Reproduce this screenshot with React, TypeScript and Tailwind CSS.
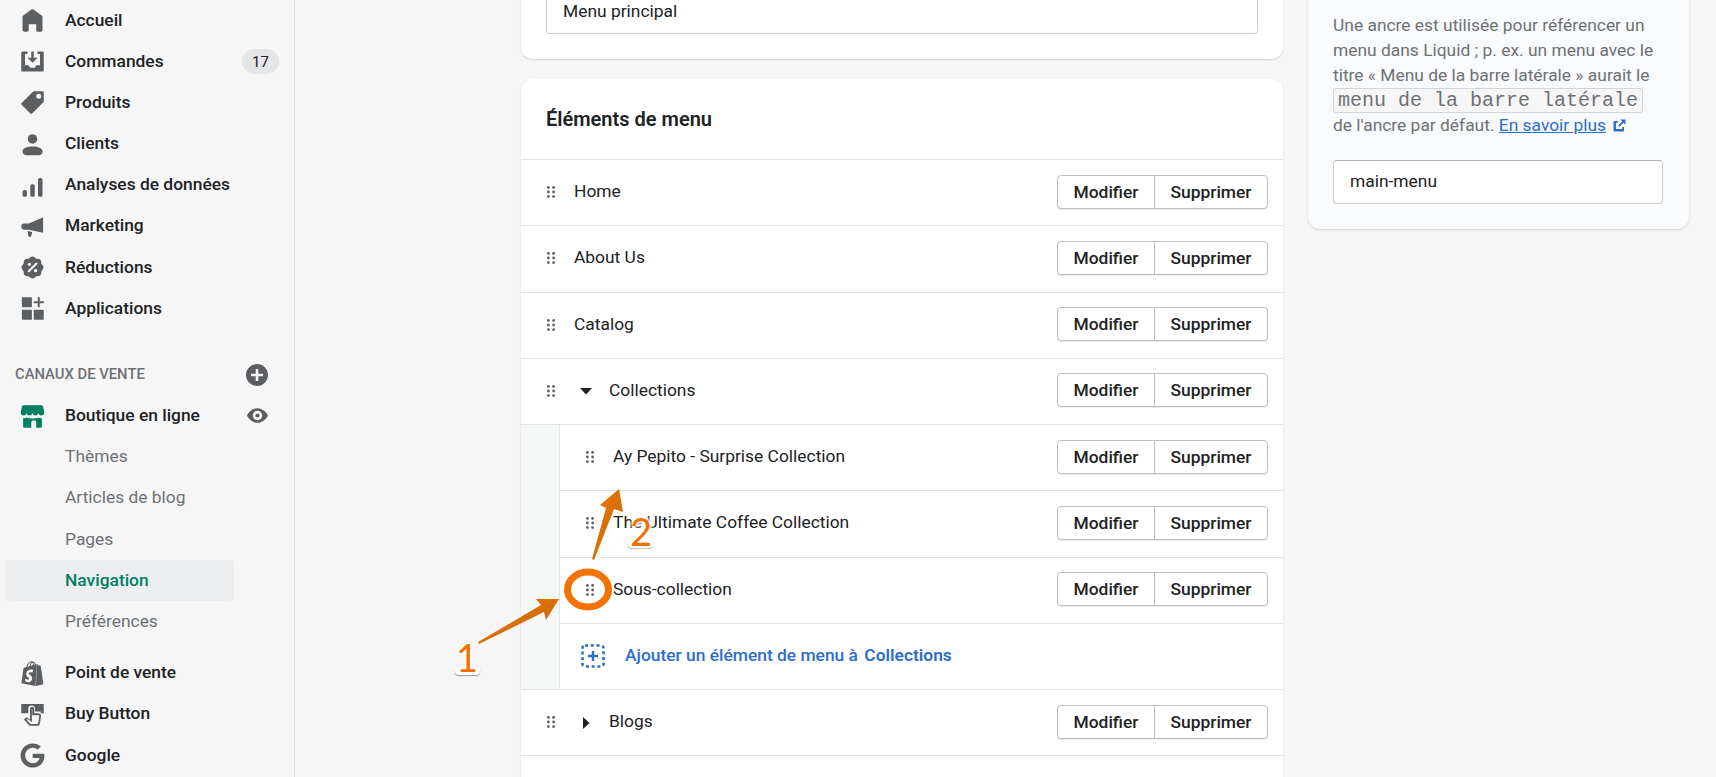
import { ReactNode } from 'react';
import { SiShopify } from 'react-icons/si';
import { FaGoogle } from 'react-icons/fa';

// --- sidebar icons ---
const Svg = ({ children, className = 'w-[25px] h-[25px] text-[#5c5f62]' }: { children: ReactNode; className?: string }) => (
  <svg viewBox="0 0 20 20" fill="currentColor" className={className}>{children}</svg>
);

const HomeIcon = () => (
  <Svg><path d="M18 7.261V17.5c0 .841-.672 1.5-1.5 1.5h-2c-.828 0-1.5-.659-1.5-1.5V13H7v4.477C7 18.318 6.328 19 5.5 19h-2c-.828 0-1.5-.682-1.5-1.523V7.261a1.5 1.5 0 0 1 .615-1.21l6.59-4.82a1.481 1.481 0 0 1 1.59-.01l6.59 4.82A1.5 1.5 0 0 1 18 7.26z" /></Svg>
);
const OrdersIcon = () => (
  <Svg>
    <path d="M2 2h4v2H4v9h3l1 2h4l1-2h3V4h-2V2h4a1 1 0 0 1 1 1v14a1 1 0 0 1-1 1H2a1 1 0 0 1-1-1V3a1 1 0 0 1 1-1z" />
    <path d="M9 2h2v5h3l-4 4-4-4h3z" />
  </Svg>
);
const TagIcon = () => (
  <Svg><path fillRule="evenodd" d="M18 1h-7a1 1 0 0 0-.7.3l-9 9a1 1 0 0 0 0 1.4l7 7a1 1 0 0 0 1.4 0l9-9A1 1 0 0 0 19 9V2a1 1 0 0 0-1-1zm-3 6a2 2 0 1 1 0-4 2 2 0 0 1 0 4z" /></Svg>
);
const UserIcon = () => (
  <Svg>
    <circle cx="10" cy="5.500" r="3.800" />
    <path d="M2 15.500c0-2.600 3.600-4 8-4s8 1.400 8 4c0 2-1.500 3-3 3H5c-1.500 0-3-1-3-3z" />
  </Svg>
);
const BarsIcon = () => (
  <Svg>
    <rect x="2" y="13.500" width="3.600" height="5.500" rx="1.500" />
    <rect x="8.200" y="9" width="3.600" height="10" rx="1.500" />
    <rect x="14.400" y="4" width="3.600" height="15" rx="1.500" />
  </Svg>
);
const MegaphoneIcon = () => (
  <Svg>
    <path d="M18.500 2.500v12.500L7 12.500H3.500a2.500 2.500 0 0 1 0-5H7z" />
    <path d="M6 13.500l3.800.9-.9 3.400a.8.8 0 0 1-1 .5l-.7-.2a.8.8 0 0 1-.6-.7z" />
  </Svg>
);
const DiscountIcon = () => (
  <Svg>
    <rect x="3" y="3" width="14" height="14" rx="3" />
    <rect x="3" y="3" width="14" height="14" rx="3" transform="rotate(45 10 10)" />
    <path d="M7 13l6-6" stroke="#f6f6f7" strokeWidth="1.800" strokeLinecap="round" />
    <circle cx="7.500" cy="7.500" r="1.300" fill="#f6f6f7" />
    <circle cx="12.500" cy="12.500" r="1.300" fill="#f6f6f7" />
  </Svg>
);
const AppsIcon = () => (
  <Svg>
    <rect x="1.500" y="1" width="8" height="8" rx=".6" />
    <rect x="1.500" y="11" width="8" height="8" rx=".6" />
    <rect x="11" y="11" width="8" height="8" rx=".6" />
    <path d="M14.200 1h1.600v3.200H19v1.600h-3.200V9h-1.600V5.800H11V4.200h3.200z" />
  </Svg>
);
const StoreIcon = () => (
  <Svg className="w-[25px] h-[25px] text-[#008060]">
    <path d="M3 1h14a1.500 1.500 0 0 1 1.500 1.300L19.500 7a2.400 2.400 0 0 1-4.700.4 2.500 2.500 0 0 1-4.800 0 2.500 2.500 0 0 1-4.800 0A2.400 2.400 0 0 1 .5 7l1-4.700A1.500 1.500 0 0 1 3 1z" />
    <path d="M2.500 11.200c1 .3 2 .2 2.800-.4.900.6 2.100.8 3.100.5v.200h3.200v-.2c1 .3 2.200.1 3.100-.5.800.6 1.800.7 2.800.4V18a1 1 0 0 1-1 1h-3.500v-4a2 2 0 0 0-4 0v4H3.500a1 1 0 0 1-1-1z" />
  </Svg>
);
const BuyButtonIcon = () => (
  <Svg>
    <path d="M1 1.500h18V9h-2.500V7.500H12V5.500a2.700 2.700 0 0 0-5.400 0V9H1z" />
    <path fillRule="evenodd" d="M8 5.500a1.700 1.700 0 0 1 3.400 0V9h3.300c1.300 0 2.300 1 2.100 2.300l-.9 6c-.1.900-.9 1.700-1.900 1.700H8.500c-.6 0-1.100-.3-1.500-.7L3.200 14l1.200-1.200c.5-.5 1.300-.5 1.800 0L8 14zm1.500 0v10.500L6 13.500l-.8.600 3 3.400h5.800c.3 0 .5-.2.600-.5l.8-6c0-.3-.2-.5-.6-.5H9.800V5.500z" />
  </Svg>
);

const GripIcon = () => (
  <svg viewBox="0 0 8 12" className="w-[8px] h-[12px] text-[#5c5f62]" fill="currentColor">
    {[1.400, 6, 10.600].map(y => (
      <g key={y}>
        <circle cx="1.400" cy={y} r="1.400" />
        <circle cx="6.600" cy={y} r="1.400" />
      </g>
    ))}
  </svg>
);

const mainNav = [
  { label: 'Accueil', icon: <HomeIcon /> },
  { label: 'Commandes', icon: <OrdersIcon />, badge: '17' },
  { label: 'Produits', icon: <TagIcon /> },
  { label: 'Clients', icon: <UserIcon /> },
  { label: 'Analyses de données', icon: <BarsIcon /> },
  { label: 'Marketing', icon: <MegaphoneIcon /> },
  { label: 'Réductions', icon: <DiscountIcon /> },
  { label: 'Applications', icon: <AppsIcon /> },
];

const NavRow = ({ icon, label, right }: { icon: ReactNode; label: string; right?: ReactNode }) => (
  <div className="flex items-center h-[41.200px] pl-[20px] pr-[15px] font-medium text-[#202223]">
    <span className="w-[45px] flex items-center">{icon}</span>
    <span className="flex-1 -mt-[2px]">{label}</span>
    {right}
  </div>
);

const SubRow = ({ label, active }: { label: string; active?: boolean }) => (
  <div className={`flex items-center h-[41.200px] ml-[5px] w-[229px] pl-[60px] rounded ${active ? 'bg-[#edeef0] text-[#007f5f] font-medium' : 'text-[#6d7175]'}`}>
    <span className="-mt-[2px]">{label}</span>
  </div>
);

const Sidebar = () => (
  <aside className="w-[295px] shrink-0 border-r border-[#e1e3e5] bg-[#f6f6f7]">
    {mainNav.map(item => (
      <NavRow
        key={item.label}
        icon={item.icon}
        label={item.label}
        right={item.badge ? <span className="w-[37px] h-[25px] flex items-center justify-center rounded-full bg-[#e4e5e7] text-[15px] text-[#202223] font-normal">{item.badge}</span> : undefined}
      />
    ))}
    <div className="flex items-center h-[41px] mt-[25px] pl-[15px] pr-[26px] text-[14.800px] font-medium text-[#6d7175]">
      <span className="flex-1 -mt-[1px]">CANAUX DE VENTE</span>
      <svg viewBox="0 0 20 20" className="w-[22px] h-[22px] text-[#5c5f62]" fill="currentColor">
        <path fillRule="evenodd" d="M10 0a10 10 0 1 1 0 20 10 10 0 0 1 0-20zm-1.200 4.500v4.300H4.500v2.400h4.300v4.300h2.400v-4.300h4.300V8.800h-4.300V4.500z" />
      </svg>
    </div>
    <NavRow
      icon={<StoreIcon />}
      label="Boutique en ligne"
      right={
        <svg viewBox="0 0 20 20" className="w-[21px] h-[21px] mr-[11px] -mt-[1px] text-[#5c5f62]" fill="currentColor">
          <path fillRule="evenodd" d="M10 3c5 0 9 4.500 10 7-1 2.500-5 7-10 7S1 12.500 0 10c1-2.500 5-7 10-7zm0 2.500a4.500 4.500 0 1 0 0 9 4.500 4.500 0 0 0 0-9zM10 8a2 2 0 1 1 0 4 2 2 0 0 1 0-4z" />
        </svg>
      }
    />
    <SubRow label="Thèmes" />
    <SubRow label="Articles de blog" />
    <SubRow label="Pages" />
    <SubRow label="Navigation" active />
    <SubRow label="Préférences" />
    <div className="h-[10px]" />
    <NavRow icon={<SiShopify className="w-[25px] h-[25px] text-[#5c5f62]" />} label="Point de vente" />
    <NavRow icon={<BuyButtonIcon />} label="Buy Button" />
    <NavRow icon={<FaGoogle className="w-[25px] h-[25px] text-[#5c5f62]" />} label="Google" />
  </aside>
);

const Actions = () => (
  <div className="ml-auto -mt-[2px] flex h-[34px] rounded border border-[#babfc3] bg-white shadow-[0_1px_0_rgba(0,0,0,0.08)] font-medium text-[#202223]">
    <span className="w-[97px] flex items-center justify-center border-r border-[#babfc3]">Modifier</span>
    <span className="w-[112px] flex items-center justify-center">Supprimer</span>
  </div>
);

const Caret = ({ open }: { open: boolean }) => (
  <svg viewBox="0 0 12 12" className="w-[12px] h-[12px] text-[#202223] mr-[17px]" fill="currentColor">
    {open ? <path d="M0 3h12L6 9.500z" /> : <path d="M3 0l6.500 6L3 12z" />}
  </svg>
);

const Row = ({ label, caret }: { label: string; caret?: 'open' | 'closed' }) => (
  <div className="flex items-center h-[66.250px] pl-[26px] pr-[15px] border-b border-[#e1e3e5] text-[#202223]">
    <span className="w-[27px] -mt-[1px] flex items-center"><GripIcon /></span>
    {caret === 'open' && <span className="ml-[6px]"><Caret open /></span>}
    {caret === 'closed' && <span className="ml-[6px]"><Caret open={false} /></span>}
    <span className="-mt-[3px]">{label}</span>
    <Actions />
  </div>
);

const ChildRow = ({ label }: { label: string }) => (
  <div className="flex items-center h-[66.250px] pl-[26px] pr-[15px] border-b border-[#e1e3e5] text-[#202223]">
    <span className="w-[27px] -mt-[1px] flex items-center"><GripIcon /></span>
    <span className="-mt-[3px]">{label}</span>
    <Actions />
  </div>
);

// orange arrows, ring and digits drawn over the page
const Annotations = () => (
  <>
    <svg className="absolute left-0 top-0 w-[1716px] h-[777px] pointer-events-none" viewBox="0 0 1716 777">
      <defs>
        <linearGradient id="arrowFill" x1="0" y1="0" x2="1" y2="1">
          <stop offset="0" stopColor="#f57c00" />
          <stop offset="1" stopColor="#b9620c" />
        </linearGradient>
      </defs>
      <polygon points="478,642 541,605 536,599 559,599 546,620 544,612 479,644" fill="url(#arrowFill)" />
      <polygon points="592,559 606,508 600,505 619,489 623,512 614,509 594,560" fill="url(#arrowFill)" />
      <ellipse cx="588" cy="589.500" rx="20.500" ry="17.500" fill="none" stroke="#f37300" strokeWidth="7" />
    </svg>
    <span className="absolute left-[455px] top-[668px] w-[25px] h-[7px] rounded-b bg-white shadow-[0_1px_1px_rgba(0,0,0,0.4)]" />
    <span className="absolute left-[628px] top-[541px] w-[25px] h-[7px] rounded-b bg-white shadow-[0_1px_1px_rgba(0,0,0,0.4)]" />
    <span className="absolute left-[456px] top-[634px] text-[38px] leading-[46px] text-[#f26f00] font-['Lato',sans-serif] [text-shadow:0_0_2px_#fff,0_0_2px_#fff,0_0_3px_#fff,0_0_4px_#fff]">1</span>
    <span className="absolute left-[630px] top-[508px] text-[38px] leading-[46px] text-[#f26f00] font-['Lato',sans-serif] [text-shadow:0_0_2px_#fff,0_0_3px_#fff,0_0_4px_#fff,0_0_5px_#fff,0_0_6px_#fff]">2</span>
  </>
);

export default function App() {
  return (
    <div className="relative flex h-[777px] overflow-hidden bg-[#f6f6f7] font-['Roboto',sans-serif] text-[17.400px]">
      <Sidebar />

      <main className="flex-1 flex items-start pl-[226px] gap-[25px]">
        <div className="w-[762px] shrink-0 flex flex-col gap-[20px]">
          {/* 名前カード */}
          <div className="-mt-[40px] bg-white rounded-xl shadow-[0_1px_2px_rgba(0,0,0,0.15)] pt-[30px] pb-[25px] px-[25px]">
            <div className="h-[44px] w-[712px] pl-[16px] flex items-center border border-[#c9cccf] border-t-[#aeb4b9] rounded text-[#202223]">
              <span className="-mt-[2px]">Menu principal</span>
            </div>
          </div>

          {/* メニュー項目 */}
          <div className="bg-white rounded-t-xl shadow-[0_1px_2px_rgba(0,0,0,0.15)]">
            <div className="h-[81px] pl-[25px] flex items-center border-b border-[#e1e3e5] text-[20px] font-semibold text-[#202223]">Éléments de menu</div>
            <Row label="Home" />
            <Row label="About Us" />
            <Row label="Catalog" />
            <Row label="Collections" caret="open" />
            <div className="flex border-b border-[#e1e3e5]">
              <div className="w-[39px] shrink-0 bg-[#f6f7f7] border-r border-[#e1e3e5]" />
              <div className="flex-1 min-w-0">
                <ChildRow label="Ay Pepito - Surprise Collection" />
                <ChildRow label="The Ultimate Coffee Collection" />
                <ChildRow label="Sous-collection" />
                <div className="flex items-center h-[65.250px] pl-[21px] text-[#2c6ecb] font-medium">
                  <svg viewBox="0 0 24 24" className="w-[24px] h-[24px] mr-[20px]" fill="none" stroke="currentColor">
                    <rect x="1.500" y="1.500" width="21" height="21" rx="2.500" strokeWidth="2.600" strokeDasharray="3 2.750" />
                    <path d="M12 7v10M7 12h10" strokeWidth="2.400" />
                  </svg>
                  <span className="-mt-[2px]">Ajouter un élément de menu à <b className="font-semibold ml-[2px]">Collections</b></span>
                </div>
              </div>
            </div>
            <Row label="Blogs" caret="closed" />
            <div className="h-[40px]" />
          </div>
        </div>

        {/* アンカー説明 */}
        <div className="-mt-[40px] w-[381px] shrink-0 bg-[#f9fafb] rounded-xl shadow-[0_1px_2px_rgba(0,0,0,0.15)] pt-[53px] pb-[25px] pl-[25px] pr-[26px]">
          <p className="text-[#6d7175] leading-[25px]">
            Une ancre est utilisée pour référencer un menu dans Liquid ; p. ex. un menu avec le titre « Menu de la barre latérale » aurait le{' '}
            <code className="inline-block h-[25px] leading-[23px] px-[4px] border border-[#d2d5d8] rounded-[3px] bg-[#f6f6f7] text-[20px] font-['Liberation_Mono',monospace] whitespace-nowrap">menu de la barre latérale</code>{' '}
            de l'ancre par défaut.{' '}
            <a className="text-[#2c6ecb] underline">En savoir plus</a>
            <svg viewBox="0 0 20 20" className="inline-block w-[15px] h-[15px] ml-[6px] -mt-[2px] text-[#2c6ecb]" fill="currentColor">
              <path d="M11 2h7v7l-2.600-2.600-5.400 5.400-1.800-1.800 5.400-5.400zM3 4h5v2.400H5.400v8.200h8.200V12H16v5a1 1 0 0 1-1 1H3a1 1 0 0 1-1-1V5a1 1 0 0 1 1-1z" />
            </svg>
          </p>
          <div className="mt-[22px] h-[44px] pl-[16px] flex items-center bg-white border border-[#c9cccf] border-t-[#aeb4b9] rounded text-[#202223]">
            <span className="-mt-[2px]">main-menu</span>
          </div>
        </div>
      </main>

      <Annotations />
    </div>
  );
}
